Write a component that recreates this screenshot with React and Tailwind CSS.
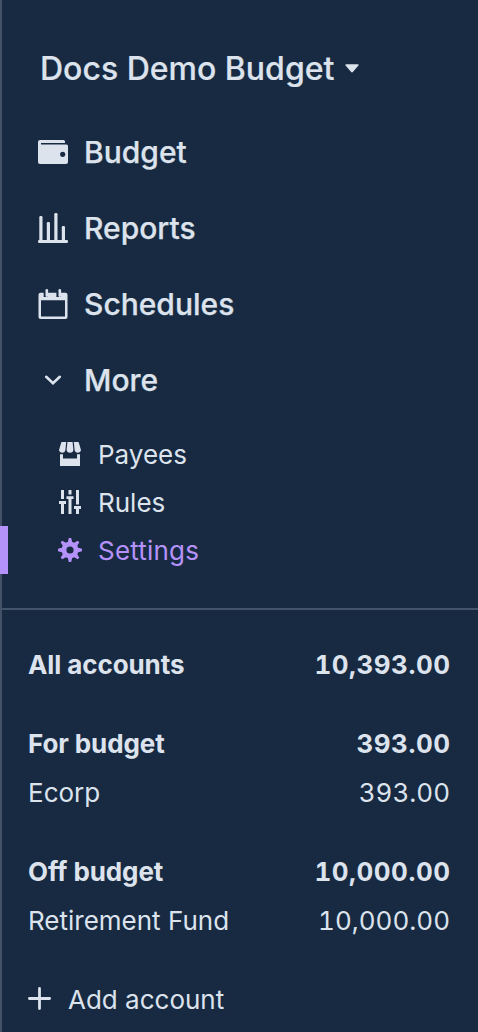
const ICON = 'block shrink-0 fill-current';

function Wallet() {
  return (
    <svg className={`${ICON} h-6 w-[30px]`} viewBox="0 0 30 24">
      <path fillRule="evenodd" d="M2 0H25.5Q27 0 27 1.5V3H3V4.4H28.5Q30 4.4 30 6V22Q30 24 28 24H2Q0 24 0 22V2Q0 0 2 0ZM24.7 11.7A2.6 2.6 0 1 0 24.7 16.9A2.6 2.6 0 1 0 24.7 11.7Z" />
    </svg>
  );
}

function Reports() {
  return (
    <svg className={`${ICON} size-[30px]`} viewBox="0 0 30 30">
      <rect x="1.3" y="3" width="3.2" height="26" rx="1.2" />
      <rect x="8.8" y="9" width="3.2" height="20" rx="1.2" />
      <rect x="16.3" y="0" width="3.2" height="29" rx="1.2" />
      <rect x="23.8" y="13" width="3.2" height="16" rx="1.2" />
      <rect x="0" y="27" width="30" height="3" rx="1.3" />
    </svg>
  );
}

function Calendar() {
  return (
    <svg className={`${ICON} size-[30px]`} viewBox="0 0 30 30">
      <path fillRule="evenodd" d="M2.5 3.8H5.7V8H10V3.8H18.4V8H23V3.8H27.5Q29.5 3.8 29.5 5.8V28Q29.5 30 27.5 30H2.5Q.5 30 .5 28V5.8Q.5 3.8 2.5 3.8ZM3 11.3V27.6H27V11.3Z" />
      <rect x="7.5" y="0" width="2.6" height="8" rx="1.2" />
      <rect x="20.5" y="0" width="2.6" height="8" rx="1.2" />
    </svg>
  );
}

function Chevron() {
  return (
    <svg className="block h-[10px] w-[30px] shrink-0" viewBox="0 0 30 10" fill="none" stroke="currentColor" strokeWidth="2.6" strokeLinecap="round" strokeLinejoin="miter">
      <path d="M8.2 1.8L15 8.2L21.8 1.8" />
    </svg>
  );
}

function Store() {
  return (
    <svg className={`${ICON} size-6`} viewBox="0 0 24 24">
      <path d="M3.4 0H8.2L7.4 8Q6.8 10.8 4.2 10.8T1 8Z" />
      <path d="M9.4 0H14.6L15.4 8Q15 10.8 12 10.8T8.6 8Z" />
      <path d="M15.8 0H20.6L23 8Q22.4 10.8 19.8 10.8T16.6 8Z" />
      <path d="M2 12.2H5V16.5H19V12.2H22V24H2Z" />
    </svg>
  );
}

function Tuning() {
  return (
    <svg className={`${ICON} size-6`} viewBox="0 0 24 24">
      <path d="M3 0H6V9H3ZM1 11H8V14H6V24H3V14H1ZM10.5 0H13.5V4.5H10.5ZM8.5 6.2H15.5V9H13.5V24H10.5V9H8.5ZM18 0H21V14.5H18ZM16 16H23V19H21V24H18V19H16Z" />
    </svg>
  );
}

function Gear() {
  return (
    <svg className={`${ICON} size-6`} viewBox="0 0 20 20">
      <path fillRule="evenodd" d="M3.94 6.5L2.22 3.64l1.42-1.42L6.5 3.94c.52-.3 1.1-.54 1.7-.7L9 0h2l.8 3.24c.6.16 1.18.4 1.7.7l2.86-1.72 1.42 1.42-1.72 2.86c.3.52.54 1.1.7 1.7L20 9v2l-3.24.8c-.16.6-.4 1.18-.7 1.7l1.72 2.86-1.42 1.42-2.86-1.72c-.52.3-1.1.54-1.7.7L11 20H9l-.8-3.24c-.6-.16-1.18-.4-1.7-.7l-2.86 1.72-1.42-1.42 1.72-2.86c-.3-.52-.54-1.1-.7-1.7L0 11V9l3.24-.8c.16-.6.4-1.18.7-1.7zM10 13a3 3 0 1 0 0-6 3 3 0 0 0 0 6z" />
    </svg>
  );
}

function Plus() {
  return (
    <svg className="mb-[3px] block size-[23px] shrink-0" viewBox="0 0 23 23" fill="none" stroke="currentColor" strokeWidth="2.8" strokeLinecap="round">
      <path d="M11.5 1.4V21.6M1.4 11.5H21.6" />
    </svg>
  );
}

function NavItem({ icon, label }) {
  return (
    <a className="flex h-[76px] items-center gap-4 pl-9 text-[30px] font-medium [-webkit-text-stroke:0.25px_currentColor]">
      {icon}
      <span>{label}</span>
    </a>
  );
}

function SubItem({ icon, label, active }) {
  return (
    <a className={active ? 'relative flex h-12 items-center gap-4 pl-14 tracking-[0.2px] text-[#b592fa]' : 'flex h-12 items-center gap-4 pl-14'}>
      {active && <span className="absolute top-0 -left-0.5 h-12 w-2 bg-[#b592fa]" />}
      {icon}
      <span className="pt-0.5">{label}</span>
    </a>
  );
}

function Account({ name, balance, bold }) {
  return (
    <div className={bold ? 'flex h-12 items-center justify-between font-bold' : 'flex h-[50px] items-center justify-between'}>
      <span className={bold ? 'tracking-[-0.1px]' : ''}>{name}</span>
      <span className={bold ? '-mr-[0.5px] tracking-[0.5px] tabular-nums' : 'tabular-nums'}>{balance}</span>
    </div>
  );
}

export default function App() {
  return (
    <nav className="h-[1032px] w-full border-l-2 border-[#425165] bg-[#182a42] font-['Inter',sans-serif] text-[26px] leading-8 text-[#dce3ed]">
      <header className="flex h-[114px] items-center gap-[10.5px] pt-6 pl-[38px] text-[32px] font-medium [-webkit-text-stroke:0.2px_currentColor]">
        <span>Docs Demo Budget</span>
        <svg className={`${ICON} mb-[2px] h-[9px] w-[14px]`} viewBox="0 0 15 9">
          <path d="M1 0H14Q15 .5 14.4 1.3L8.4 8.3Q7.5 9.1 6.6 8.3L.6 1.3Q0 .5 1 0Z" />
        </svg>
      </header>
      <NavItem icon={<Wallet />} label="Budget" />
      <NavItem icon={<Reports />} label="Reports" />
      <NavItem icon={<Calendar />} label="Schedules" />
      <NavItem icon={<Chevron />} label="More" />
      <div className="pt-3">
        <SubItem icon={<Store />} label="Payees" />
        <SubItem icon={<Tuning />} label="Rules" />
        <SubItem icon={<Gear />} label="Settings" active />
      </div>
      <div className="mt-[34px] -ml-0.5 h-0.5 bg-[#43536a]" />
      <section className="pt-[31px] pr-7 pl-[26px]">
        <Account name="All accounts" balance="10,393.00" bold />
        <div className="mt-[31px]">
          <Account name="For budget" balance="393.00" bold />
          <Account name="Ecorp" balance="393.00" />
        </div>
        <div className="mt-[30px]">
          <Account name="Off budget" balance="10,000.00" bold />
          <Account name="Retirement Fund" balance="10,000.00" />
        </div>
        <div className="mt-[30px] flex h-12 items-center gap-[17px]">
          <Plus />
          <span>Add account</span>
        </div>
      </section>
    </nav>
  );
}
